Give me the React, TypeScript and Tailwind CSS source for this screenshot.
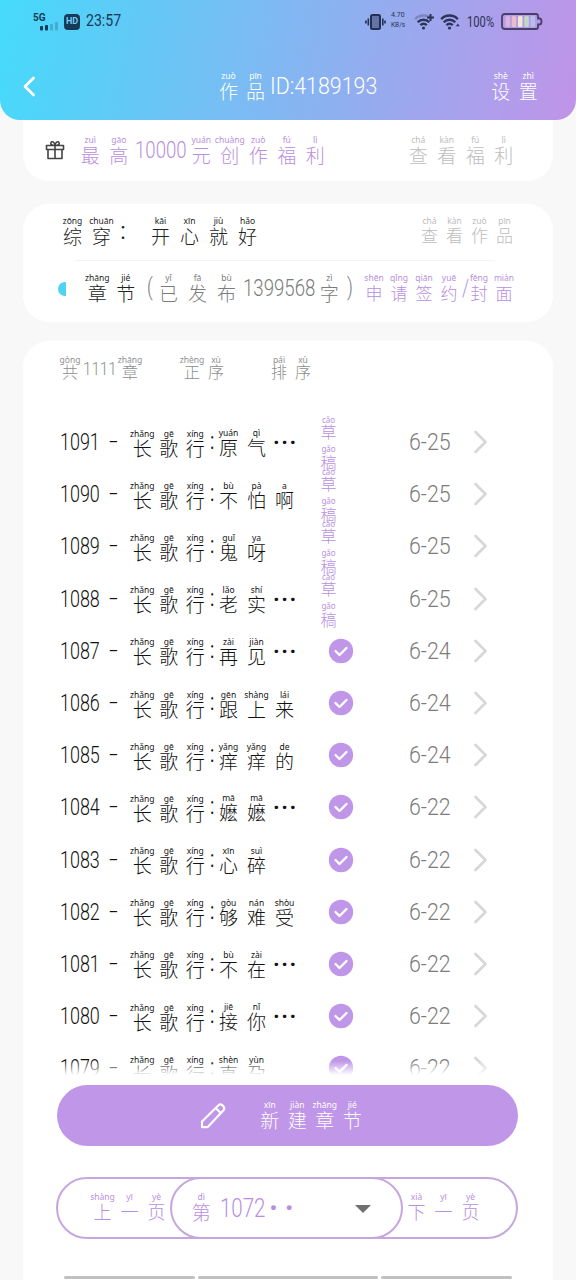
import { clsx } from 'clsx';

type Glyph = [string, string];

interface Chapter {
  no: number;
  name: Glyph[];
  more?: boolean;
  date: string;
  draft?: boolean;
}

const series: Glyph[] = [['长', 'zhǎng'], ['歌', 'gē'], ['行', 'xíng']];

const chapters: Chapter[] = [
  { no: 1091, name: [['原', 'yuán'], ['气', 'qì']], more: true, date: '6-25', draft: true },
  { no: 1090, name: [['不', 'bù'], ['怕', 'pà'], ['啊', 'a']], date: '6-25', draft: true },
  { no: 1089, name: [['鬼', 'guǐ'], ['呀', 'ya']], date: '6-25', draft: true },
  { no: 1088, name: [['老', 'lǎo'], ['实', 'shí']], more: true, date: '6-25', draft: true },
  { no: 1087, name: [['再', 'zài'], ['见', 'jiàn']], more: true, date: '6-24' },
  { no: 1086, name: [['跟', 'gēn'], ['上', 'shàng'], ['来', 'lái']], date: '6-24' },
  { no: 1085, name: [['痒', 'yǎng'], ['痒', 'yǎng'], ['的', 'de']], date: '6-24' },
  { no: 1084, name: [['嬷', 'mā'], ['嬷', 'mā']], more: true, date: '6-22' },
  { no: 1083, name: [['心', 'xīn'], ['碎', 'suì']], date: '6-22' },
  { no: 1082, name: [['够', 'gòu'], ['难', 'nán'], ['受', 'shòu']], date: '6-22' },
  { no: 1081, name: [['不', 'bù'], ['在', 'zài']], more: true, date: '6-22' },
  { no: 1080, name: [['接', 'jiē'], ['你', 'nǐ']], more: true, date: '6-22' },
  { no: 1079, name: [['真', 'shèn'], ['孕', 'yùn']], date: '6-22' },
];

// Characters with their pinyin on top, one fixed-width cell each
function Pinyin({ text, cell = 'w-[28.5px]', size = 'text-[19px] leading-[19px]' }: { text: Glyph[]; cell?: string; size?: string }) {
  return (
    <span className="flex shrink-0">
      {text.map(([char, sound], i) => (
        <span key={i} className={clsx('flex shrink-0 flex-col items-center', cell)}>
          <span className="font-['Noto_Sans',sans-serif] text-[8.5px] leading-[11px] font-normal whitespace-nowrap">{sound}</span>
          <span className={size}>{char}</span>
        </span>
      ))}
    </span>
  );
}

// Narrow digits and latin text in a fixed slot
function Num({
  children,
  className,
  size = 'text-[23px]',
  stretch = 'scale-x-[.78]',
}: {
  children: React.ReactNode;
  className?: string;
  size?: string;
  stretch?: string;
}) {
  return (
    <span className={clsx("flex shrink-0 font-['Roboto',sans-serif] leading-[30px] font-light", size, className)}>
      <span className={clsx('origin-left whitespace-nowrap', stretch)}>{children}</span>
    </span>
  );
}

function Wifi({ plus }: { plus?: boolean }) {
  return (
    <svg width="21" height="18" viewBox="0 0 21 18" fill="none" stroke="#2b3559" strokeWidth="2.4">
      <path d="M1.2 6.2C5.5 1.3 13.5 1.3 17.8 6.2" opacity={plus ? 0.3 : 1} />
      <path d="M3.7 9.3c3.3-3.5 8.3-3.5 11.6 0M6.4 12.2c2-1.8 4.4-1.8 6.4 0" />
      <circle cx="9.5" cy="15" r="1.6" fill="#2b3559" stroke="none" />
      {plus ? <path d="M16.5 1v7M13 4.5h7" strokeWidth="2" /> : <path d="M17.8 10.5l1.9 2.7h-3.8z" fill="#2b3559" stroke="none" />}
    </svg>
  );
}

function StatusBar() {
  return (
    <div className="flex h-[44px] items-center pl-[33px] text-[#173a56]">
      <div className="relative h-[20px] w-[31px]">
        <span className="block font-['Roboto',sans-serif] text-[10px] leading-[12px] font-bold">5G</span>
        <svg className="absolute top-[9px] left-[6px]" width="20" height="10" viewBox="0 0 20 10" fill="#173a56">
          <rect x="1" y="5" width="3" height="4.5" rx="1" />
          <rect x="6" y="4" width="3" height="5.5" rx="1" />
          <rect x="11" y="3" width="3" height="6.5" rx="1" opacity=".25" />
          <rect x="16" y="1" width="3" height="8.5" rx="1" opacity=".25" />
        </svg>
      </div>
      <span className="flex h-[16px] w-[16px] items-center justify-center rounded-[4px] bg-[#173a56] font-['Roboto',sans-serif] text-[9px] font-bold text-[#6ecdf3]">HD</span>
      <span className="-mt-0.5 ml-[6px] w-[279px] font-['Roboto',sans-serif] text-[17px] font-normal">
        <span className="inline-block origin-left scale-x-[.83]">23:57</span>
      </span>
      <svg width="21" height="18" viewBox="0 0 21 18" fill="none" stroke="#26304f" strokeWidth="1.6">
        <rect x="6" y="2" width="9" height="14" rx="1.5" fill="#26304f" fillOpacity=".45" strokeWidth="2" />
        <path d="M3.3 5.5v7M.9 7.5v3M17.8 5.5v7M20 7.5v3" />
      </svg>
      <div className="-mt-1 ml-[5px] w-[23px] font-['Roboto',sans-serif] text-[7px] leading-[10px] font-normal text-[#2b3559]">
        <div>4.70</div>
        <div className="text-[6.5px]">KB/s</div>
      </div>
      <Wifi plus />
      <span className="w-[5px]" />
      <Wifi />
      <span className="ml-[6px] w-[34px] font-['Roboto',sans-serif] text-[14px] font-normal text-[#2b3050]">
        <span className="inline-block origin-left scale-x-[.8]">100%</span>
      </span>
      <svg className="-mt-0.5" width="42" height="17" viewBox="0 0 42 17" fill="none">
        <path d="M4 1h31q2 0 2 2v2.500h1.500q2 0 2 3t-2 3H37V14q0 2-2 2H4q-3 0-3-3V4q0-3 3-3z" stroke="#4a3f68" strokeWidth="1.8" />
        <rect x="4.500" y="3" width="4.500" height="11" rx="1.500" fill="#e0b2da" />
        <rect x="10.700" y="3" width="4.500" height="11" rx="1.500" fill="#ecbcc9" />
        <rect x="17" y="3" width="4.500" height="11" rx="1.500" fill="#f3e6cf" />
        <rect x="23.300" y="3" width="4.500" height="11" rx="1.500" fill="#c2d8c6" />
        <rect x="29.600" y="3" width="4.500" height="11" rx="1.500" fill="#b3c1e9" />
      </svg>
    </div>
  );
}

function Header() {
  return (
    <header className="h-[120px] rounded-b-[20px] bg-[linear-gradient(100deg,#45dafb_0%,#c093e8_100%)]">
      <StatusBar />
      <div className="flex h-[76px] items-start pl-[22px] text-white">
        <svg className="mt-[31px]" width="15" height="22" viewBox="0 0 15 22" fill="none" stroke="white" strokeWidth="2.800" strokeLinecap="round" strokeLinejoin="round">
          <path d="M11.500 3L3 11.500l8.500 8.500" />
        </svg>
        <div className="mt-[26px] ml-[178px] flex w-[272px]">
          <Pinyin text={[['作', 'zuò'], ['品', 'pīn']]} cell="w-[27px]" />
          <Num className="mt-[2px] ml-[1px] w-[110px]" stretch="scale-x-[.93]">ID:4189193</Num>
        </div>
        <div className="mt-[26px]">
          <Pinyin text={[['设', 'shè'], ['置', 'zhì']]} cell="w-[27.5px]" />
        </div>
      </div>
    </header>
  );
}

function BonusCard() {
  return (
    <section className="mx-[23px] flex h-[61px] items-start rounded-b-[26px] bg-white pt-[14px] pl-[22px] text-[#b98fe0]">
      <svg className="mt-[6px]" width="20" height="20" viewBox="0 0 20 20" fill="none" stroke="#444" strokeWidth="1.600" strokeLinejoin="round">
        <path d="M1.500 5.500h17v4h-17zM3 9.500v9h14v-9M10 5.500v13M10 5.500C7 5.500 5 4.500 6 2.500s4 0 4 3c0-3 3-5 4-3s-1 3-4 3" />
      </svg>
      <div className="ml-[11px] flex w-[328px]">
        <Pinyin text={[['最', 'zuì'], ['高', 'gāo']]} />
        <Num className="mt-[2px] w-[54px] pl-[2px]" stretch="scale-x-[.81]">10000</Num>
        <Pinyin text={[['元', 'yuán'], ['创', 'chuàng'], ['作', 'zuò'], ['福', 'fú'], ['利', 'lì']]} />
      </div>
      <div className="text-[#bdbdbd]">
        <Pinyin text={[['查', 'chá'], ['看', 'kàn'], ['福', 'fú'], ['利', 'lì']]} />
      </div>
    </section>
  );
}

function BookCard() {
  return (
    <section className="mx-[23px] mt-[23px] h-[118px] rounded-[26px] bg-white text-[#222]">
      <div className="flex h-[56px] pt-[11px] pl-[35px]">
        <Pinyin text={[['综', 'zōng'], ['穿', 'chuān']]} cell="w-[29px]" />
        <span className="w-[30px] pt-[3px] pl-[2px] text-[20px] leading-[26px]">：</span>
        <Pinyin text={[['开', 'kāi'], ['心', 'xīn'], ['就', 'jiù'], ['好', 'hǎo']]} cell="w-[29px]" />
        <div className="ml-[155px] text-[#bdbdbd]">
          <Pinyin text={[['查', 'chá'], ['看', 'kàn'], ['作', 'zuò'], ['品', 'pīn']]} cell="w-[25px]" size="text-[17px] leading-[18px]" />
        </div>
      </div>
      <div className="mr-[58px] ml-[52px] h-px bg-[#f4f4f4]" />
      <div className="flex pt-[11px] pl-[35px]">
        <span className="mt-[10px] mr-[17px] h-[14px] w-[8px] rounded-l-full bg-[#4fd3f1]" />
        <Pinyin text={[['章', 'zhāng'], ['节', 'jié']]} />
        <div className="flex text-[#7c7c7c]">
          <Num className="mt-px w-[14px] justify-end">(</Num>
          <Pinyin text={[['已', 'yǐ'], ['发', 'fā'], ['布', 'bù']]} cell="w-[29px]" />
          <Num className="mt-[2px] w-[74px] pl-[2px]" stretch="scale-x-[.81]">1399568</Num>
          <Pinyin text={[['字', 'zì']]} />
          <Num className="mt-px w-[18px] pl-[3px]">)</Num>
        </div>
        <div className="flex text-[#b98fe0]">
          <Pinyin text={[['申', 'shēn'], ['请', 'qǐng'], ['签', 'qiān'], ['约', 'yuē']]} cell="w-[25px]" size="text-[17px] leading-[19px]" />
          <Num className="mt-[2px] w-[5px]">/</Num>
          <Pinyin text={[['封', 'fēng'], ['面', 'miàn']]} cell="w-[25px]" size="text-[17px] leading-[19px]" />
        </div>
      </div>
    </section>
  );
}

function Draft() {
  return (
    <span className="flex h-[52px] w-[18px] flex-col items-center text-[#b98fe0]">
      <span className="font-['Noto_Sans',sans-serif] text-[8px] leading-[7px] font-normal">cǎo</span>
      <span className="text-[16px] leading-[16px]">草</span>
      <span className="mt-[6px] font-['Noto_Sans',sans-serif] text-[8px] leading-[7px] font-normal">gǎo</span>
      <span className="mt-[2px] text-[16px] leading-[17px]">稿</span>
    </span>
  );
}

function ChapterRow({ chapter }: { chapter: Chapter }) {
  return (
    <li className="flex h-[52.2px] items-center pl-[37px] text-[#111]">
      <Num className="w-[49px] pt-[2px]">{chapter.no}</Num>
      <Num className="w-[20px]" stretch="scale-x-[1.35]">-</Num>
      <Pinyin text={series} cell="w-[26.5px]" size="text-[19px] leading-[18px]" />
      <Num className="w-[6px] pl-[1px] font-normal">:</Num>
      <div className="flex w-[104px]">
        <Pinyin text={chapter.name} cell="w-[28px]" size="text-[19px] leading-[18px]" />
        {chapter.more && (
          <span className="ml-[3px] font-['Noto_Sans',sans-serif] text-[20px] leading-[30px] font-bold tracking-[2.600px]">···</span>
        )}
      </div>
      <div className="w-[91px]">
        {chapter.draft ? (
          <div className="pl-[1px]"><Draft /></div>
        ) : (
          <svg className="ml-[9px]" width="26" height="26" viewBox="0 0 26 26" fill="none">
            <circle cx="13" cy="13" r="12.200" fill="#bf96e8" />
            <path d="M7.500 13l4 4 7-7" stroke="white" strokeWidth="2.400" strokeLinecap="round" strokeLinejoin="round" />
          </svg>
        )}
      </div>
      <Num className="-ml-px w-[64px] pt-[2px] text-[#7c7c7c]" stretch="scale-x-[.93]">{chapter.date}</Num>
      <svg width="16" height="24" viewBox="0 0 16 24" fill="none" stroke="#d8d8d8" strokeWidth="2.800" strokeLinecap="round" strokeLinejoin="round">
        <path d="M2.500 2L12.500 12l-10 10" />
      </svg>
    </li>
  );
}

function Pager() {
  return (
    <div className="mr-[35px] ml-[33px] flex h-[62px] rounded-[31px] border-2 border-[#c6a6e0] text-[#b98fe0]">
      <div className="w-[112px] pt-[12px] pl-[31px]">
        <Pinyin text={[['上', 'shàng'], ['一', 'yī'], ['页', 'yè']]} cell="w-[27px]" size="text-[18px] leading-[19px]" />
      </div>
      <div className="-my-0.5 flex w-[233px] rounded-[31px] border-2 border-[#c6a6e0] pt-[12px] pl-[15px]">
        <Pinyin text={[['第', 'dì']]} />
        <Num className="w-[50px] pt-[3px] pl-[4px]" size="text-[25px]" stretch="scale-x-[.82]">1072</Num>
        <span className="w-[40px] pl-[4px] font-['Noto_Sans',sans-serif] text-[28px] leading-[33px] font-bold tracking-[8px]">··</span>
        <svg className="mt-[14px] ml-[49px]" width="16" height="9" viewBox="0 0 16 9" fill="#707070">
          <path d="M0 0h16L8 8z" />
        </svg>
      </div>
      <div className="pt-[12px]">
        <Pinyin text={[['下', 'xià'], ['一', 'yī'], ['页', 'yè']]} cell="w-[27px]" size="text-[18px] leading-[19px]" />
      </div>
    </div>
  );
}

export default function App() {
  return (
    <div className="flex h-[1280px] w-[576px] flex-col overflow-hidden bg-[#f8f8f8] font-['Noto_Sans_CJK_SC',sans-serif] font-light">
      <Header />
      <BonusCard />
      <BookCard />
      <main className="mx-[23px] mt-[19px] flex h-[939px] flex-col rounded-t-[26px] bg-white">
        <div className="flex h-[75px] pt-[13px] pl-[34px] text-[#8e8e8e]">
          <Pinyin text={[['共', 'gòng']]} cell="w-[26px]" size="text-[16px] leading-[13px]" />
          <Num className="w-[34px]" size="text-[19px]" stretch="scale-x-[.8]">1111</Num>
          <Pinyin text={[['章', 'zhāng']]} cell="w-[26px]" size="text-[16px] leading-[13px]" />
          <span className="w-[37px]" />
          <Pinyin text={[['正', 'zhèng'], ['序', 'xù']]} cell="w-[24px]" size="text-[16px] leading-[13px]" />
          <span className="w-[39px]" />
          <Pinyin text={[['排', 'pái'], ['序', 'xù']]} cell="w-[24px]" size="text-[16px] leading-[13px]" />
        </div>
        <div className="relative h-[659px] overflow-hidden">
          <ul>
            {chapters.map((chapter) => (
              <ChapterRow key={chapter.no} chapter={chapter} />
            ))}
          </ul>
          <div className="absolute inset-x-0 bottom-0 h-[14px] bg-linear-to-b from-white/0 to-white" />
        </div>
        <button className="mt-[10px] mr-[35px] ml-[34px] flex h-[61px] items-start rounded-[31px] bg-[#bf96e8] pt-[14px] pl-[142px] font-light text-white">
          <svg className="mt-[3px]" width="28" height="28" viewBox="0 0 28 28" fill="none" stroke="white" strokeWidth="2.200" strokeLinejoin="round">
            <path d="M3 25.200v-5.700L19.500 3.200q2-1.800 4 .2l.8.800q2 2 .2 4L8.500 25.200zM16.700 6l5 5" />
          </svg>
          <span className="ml-[29px]">
            <Pinyin text={[['新', 'xīn'], ['建', 'jiàn'], ['章', 'zhāng'], ['节', 'jié']]} cell="w-[27.5px]" />
          </span>
        </button>
        <div className="h-[31px] shrink-0" />
        <Pager />
        <div className="mt-[37px] mr-[41px] ml-[41px] flex h-[3px] gap-[3px]">
          <i className="w-[131px] rounded-full bg-[#c1c1c1]" />
          <i className="w-[180px] rounded-full bg-[#c1c1c1]" />
          <i className="w-[131px] rounded-full bg-[#c1c1c1]" />
        </div>
      </main>
    </div>
  );
}
